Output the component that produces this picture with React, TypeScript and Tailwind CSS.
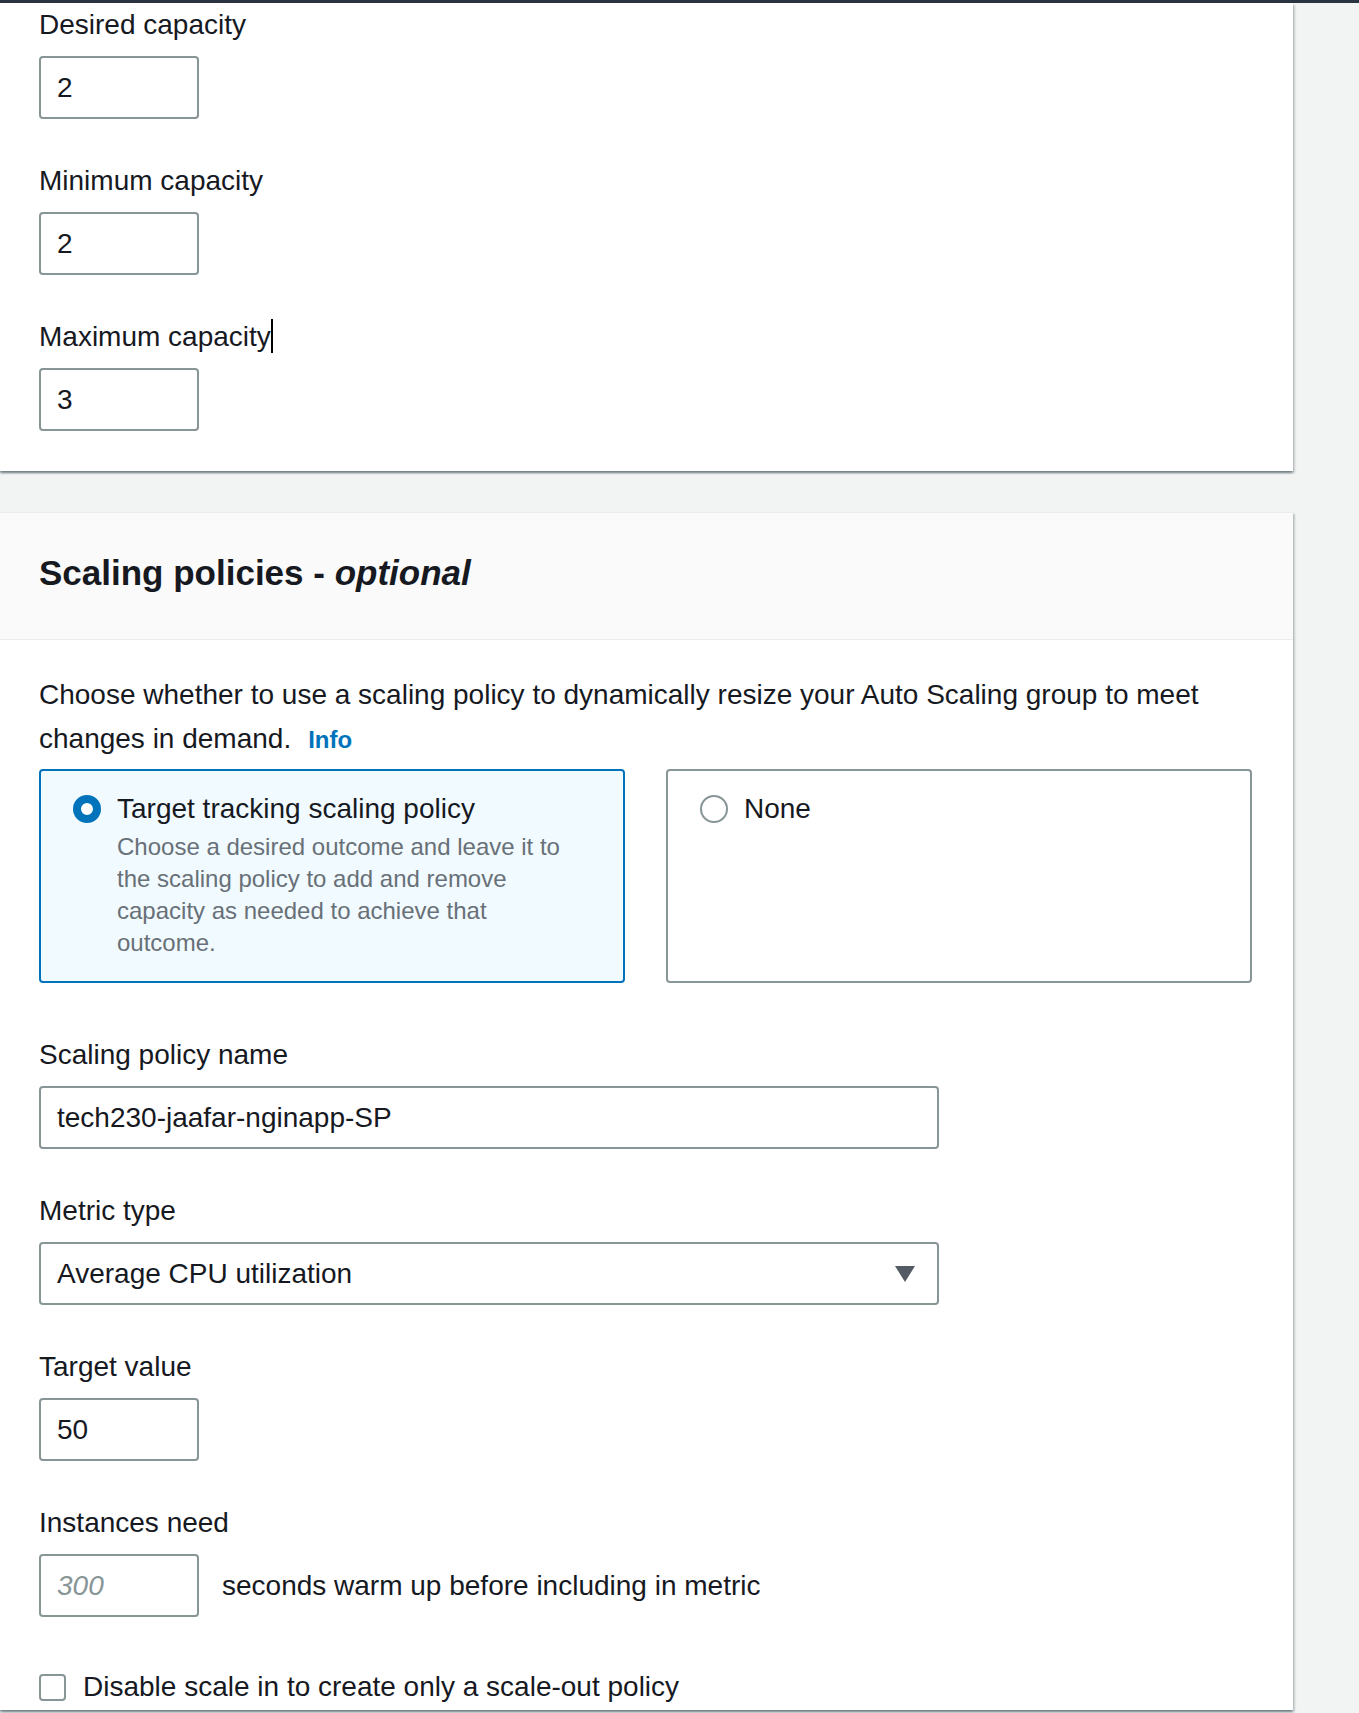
import React from "react";

function Label({ children }: { children: React.ReactNode }) {
  return <div className="h-[44px] text-[28px] leading-[44px] text-[#16191f] whitespace-nowrap">{children}</div>;
}

function Box({ value, wide, placeholder }: { value?: string; wide?: boolean; placeholder?: string }) {
  return (
    <div
      className={`mt-[9px] h-[63px] ${wide ? "w-[900px]" : "w-[160px]"} border-2 border-[#879596] rounded-[4px] bg-white flex items-center pl-[16px] text-[28px] text-[#16191f]`}
    >
      {value ? <span>{value}</span> : <span className="italic text-[#879596]">{placeholder}</span>}
    </div>
  );
}

export default function App() {
  return (
    <div className="w-[1359px] min-h-[1713px] bg-[#f2f3f3] border-t-[3px] border-[#2a3440] font-['Liberation_Sans',Arial,sans-serif]">
      <div className="w-[1293px]">
        {/* Card 1 */}
        <div className="bg-white pl-[39px] pb-[40px] shadow-[0_2px_2px_0_rgba(0,28,36,0.35),2px_2px_2px_0_rgba(0,28,36,0.15),-2px_2px_2px_0_rgba(0,28,36,0.15)]">
          <div>
            <Label>Desired capacity</Label>
            <Box value="2" />
          </div>
          <div className="mt-[40px]">
            <Label>Minimum capacity</Label>
            <Box value="2" />
          </div>
          <div className="mt-[40px]">
            <Label>
              Maximum capacity
              <span className="inline-block w-[2px] h-[34px] bg-black align-[-7px]" />
            </Label>
            <Box value="3" />
          </div>
        </div>

        {/* Card 2 */}
        <div className="mt-[41px] bg-white border-t border-[#eaeded] pb-[1px] shadow-[0_2px_2px_0_rgba(0,28,36,0.35),2px_2px_2px_0_rgba(0,28,36,0.15),-2px_2px_2px_0_rgba(0,28,36,0.15)]">
          <div className="bg-[#fafafa] pl-[39px] pt-[38px] pb-[44px] border-b border-[#eaeded]">
            <h2 className="text-[35px] leading-[44px] font-bold text-[#16191f] whitespace-nowrap">
              Scaling policies - <i>optional</i>
            </h2>
          </div>
          <div className="pl-[39px] pr-[41px] pt-[33px]">
            <p className="text-[28px] leading-[44px] text-[#16191f] whitespace-nowrap">
              Choose whether to use a scaling policy to dynamically resize your Auto Scaling group to meet
              <br />
              changes in demand.
              <a className="ml-[17px] text-[24px] font-bold text-[#0073bb]">Info</a>
            </p>

            <div className="mt-[7px] grid grid-cols-2 gap-[41px]">
              <div className="h-[214px] border-2 border-[#0073bb] rounded-[4px] bg-[#f1faff] pl-[32px] pt-[16px] pb-[22px] flex gap-[16px]">
                <svg width="28" height="28" viewBox="0 0 28 28" className="mt-[8px] shrink-0">
                  <circle cx="14" cy="14" r="10" fill="#fff" stroke="#0073bb" strokeWidth="8" />
                </svg>
                <div>
                  <div className="text-[28px] leading-[44px] text-[#16191f] whitespace-nowrap">Target tracking scaling policy</div>
                  <div className="text-[24px] leading-[32px] text-[#687078] whitespace-nowrap">
                    Choose a desired outcome and leave it to
                    <br />
                    the scaling policy to add and remove
                    <br />
                    capacity as needed to achieve that
                    <br />
                    outcome.
                  </div>
                </div>
              </div>
              <div className="h-[214px] border-2 border-[#879596] rounded-[4px] bg-white pl-[32px] pt-[16px] flex gap-[16px]">
                <svg width="28" height="28" viewBox="0 0 28 28" className="mt-[8px] shrink-0">
                  <circle cx="14" cy="14" r="13" fill="#fff" stroke="#879596" strokeWidth="2" />
                </svg>
                <div className="text-[28px] leading-[44px] text-[#16191f]">None</div>
              </div>
            </div>

            <div className="mt-[50px]">
              <Label>Scaling policy name</Label>
              <Box value="tech230-jaafar-nginapp-SP" wide />
            </div>

            <div className="mt-[40px]">
              <Label>Metric type</Label>
              <div className="mt-[9px] h-[63px] w-[900px] border-2 border-[#879596] rounded-[4px] bg-white flex items-center justify-between pl-[16px] pr-[22px] text-[28px] text-[#16191f]">
                <span>Average CPU utilization</span>
                <svg width="20" height="16" viewBox="0 0 20 16">
                  <path d="M0 0 L20 0 L10 16 Z" fill="#545b64" />
                </svg>
              </div>
            </div>

            <div className="mt-[40px]">
              <Label>Target value</Label>
              <Box value="50" />
            </div>

            <div className="mt-[40px]">
              <Label>Instances need</Label>
              <div className="flex items-center gap-[23px]">
                <Box placeholder="300" />
                <span className="mt-[9px] text-[28px] text-[#16191f] whitespace-nowrap">seconds warm up before including in metric</span>
              </div>
            </div>

            <div className="mt-[48px] h-[44px] flex items-center gap-[17px]">
              <div className="w-[27px] h-[27px] border-2 border-[#879596] rounded-[4px] bg-white" />
              <span className="text-[28px] leading-[44px] text-[#16191f] whitespace-nowrap">Disable scale in to create only a scale-out policy</span>
            </div>
          </div>
        </div>
      </div>
    </div>
  );
}
